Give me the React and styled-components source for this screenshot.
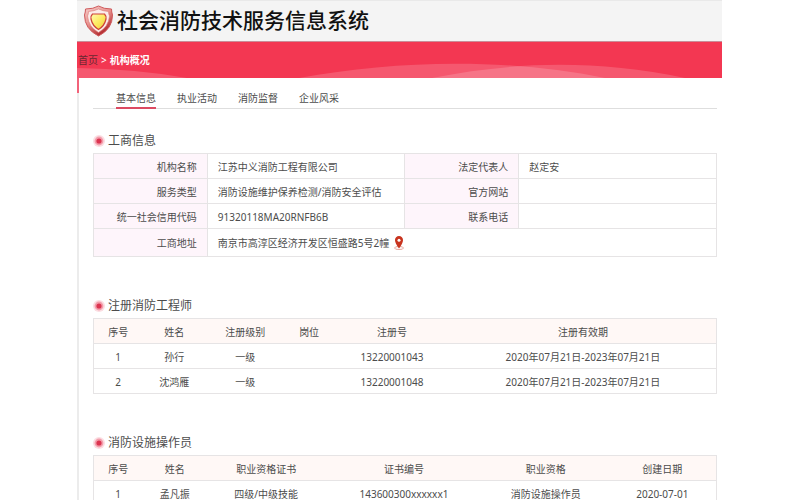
import React from "react";
import styled, { createGlobalStyle } from "styled-components";

const GlobalStyle = createGlobalStyle`
  * {
    box-sizing: border-box;
  }

  body {
    margin: 0;
    background: #fff;
    color: #4c4c4c;
    font-family: "Noto Sans", "Noto Sans CJK SC", sans-serif;
    font-size: 10px;
    line-height: 16px;
  }
`;

const Page = styled.div`
  padding: 0 78px 0 77px;
`;

const Header = styled.header`
  display: flex;
  align-items: center;
  gap: 3px;
  height: 42px;
  padding-left: 6px;
  background: #f4f4f4;
  border-top: 1px solid #e9e9e9;
  border-bottom: 1px solid #c98d98;
`;

const SiteTitle = styled.h1`
  margin: 0;
  padding-bottom: 4px;
  font-family: "Noto Sans CJK SC", sans-serif;
  font-weight: 500;
  font-size: 21px;
  line-height: 32px;
  color: #111;
  white-space: nowrap;
`;

const Banner = styled.div`
  display: grid;
  height: 36px;
  background: #f33752;

  > * {
    grid-area: 1 / 1;
  }
`;

const Waves = styled.svg`
  display: block;
  width: 100%;
  height: 36px;
`;

const Breadcrumb = styled.nav`
  display: flex;
  gap: 3px;
  align-self: center;
  padding-left: 1px;
  color: #fff;
  z-index: 1;

  a {
    color: #6b2731;
    text-decoration: none;
  }

  strong {
    font-weight: 700;
  }
`;

const Content = styled.main`
  padding: 0 5px 0 14px;
  border-left: 2px solid;
  border-image: linear-gradient(#f2637a 16px, #ececec 16px) 1;
`;

const Tabs = styled.nav`
  display: flex;
  gap: 21px;
  padding: 12px 0 0 23px;
  border-bottom: 1px solid #dedede;
`;

const Tab = styled.a`
  height: 19px;
  margin-bottom: -1px;
  color: #4c4c4c;
  text-decoration: none;
  border-bottom: 2px solid ${(props) => (props.$active ? "#dc4a62" : "transparent")};
`;

const Section = styled.section`
  margin-bottom: 38px;

  &:first-of-type {
    margin-top: 21px;
  }
`;

const SectionTitle = styled.h2`
  display: flex;
  align-items: center;
  gap: 3px;
  margin: 0 0 2px;
  padding-top: 1px;
  font-weight: 400;
  font-size: 12px;
  line-height: 20px;
`;

const Table = styled.table`
  width: 100%;
  table-layout: fixed;
  border-collapse: collapse;
  border: 1px solid #e6e4e5;

  tr {
    height: 25px;
    border-bottom: 1px solid #e6e4e5;
  }

  th,
  td {
    padding: 2px 0 0;
    font-weight: 400;
    white-space: nowrap;
  }
`;

const InfoTable = styled(Table)`
  tr:last-child {
    height: 28px;
  }

  th,
  td {
    padding: 2px 10px 0;
    text-align: left;
    border-right: 1px solid #e6e4e5;
  }

  tr:last-child > * {
    padding-top: 0;
  }

  th {
    text-align: right;
    background: #fef5fb;
  }
`;

const ListTable = styled(Table)`
  text-align: center;

  thead {
    background: #fff8f6;
  }
`;

const Address = styled.span`
  display: flex;
  align-items: center;
  gap: 4px;
`;

const ShieldIcon = () => (
  <svg width="31" height="32" viewBox="0 0 30 32" aria-hidden="true">
    <defs>
      <linearGradient id="shield-red" x1="0" y1="0" x2="0.6" y2="1">
        <stop offset="0" stopColor="#f6cfcd" />
        <stop offset="0.5" stopColor="#e99490" />
        <stop offset="1" stopColor="#ad2226" />
      </linearGradient>
      <linearGradient id="shield-gold" x1="0" y1="0" x2="1" y2="1">
        <stop offset="0" stopColor="#fffbb0" />
        <stop offset="0.5" stopColor="#fdeb62" />
        <stop offset="1" stopColor="#edc83a" />
      </linearGradient>
    </defs>
    <path
      d="M15 1 Q20 4 28 4 Q28 7 29 10 Q29 24 15 31 Q1 24 1 10 Q2 7 2 4 Q10 4 15 1 Z"
      fill="url(#shield-red)"
      stroke="#cf5a5c"
    />
    <path
      d="M15 4 Q19 6 25 6.5 Q25 9 26 11 Q25 22 15 27.5 Q5 22 4 11 Q5 9 5 6.5 Q11 6 15 4 Z"
      fill="#fbecea"
      stroke="#dc7b79"
      strokeWidth="0.6"
    />
    <path
      d="M9 9 H21 Q23 11 22.5 14 Q21 21 15 24.5 Q9 21 7.5 14 Q7 11 9 9 Z"
      fill="url(#shield-gold)"
      stroke="#cf4238"
      strokeWidth="1.2"
    />
  </svg>
);

const BulletIcon = () => (
  <svg width="12" height="12" viewBox="0 0 12 12" aria-hidden="true">
    <circle cx="6" cy="6" r="6" fill="#fbdde2" />
    <circle cx="6" cy="6" r="4.4" fill="#f39eac" />
    <circle cx="6" cy="6" r="2.6" fill="#dc3450" />
  </svg>
);

const PinIcon = () => (
  <svg width="12" height="14" viewBox="0 0 12 14" aria-hidden="true">
    <ellipse cx="6" cy="12" rx="4.5" ry="1.5" fill="none" stroke="#e6a39b" />
    <path d="M6 0 A4 4 0 0 1 10 4.2 Q10 7 6 12.5 Q2 7 2 4.2 A4 4 0 0 1 6 0 Z" fill="#c8341f" />
    <circle cx="6" cy="4.2" r="1.5" fill="#fff" />
  </svg>
);

const tabs = ["基本信息", "执业活动", "消防监督", "企业风采"];

const engineers = {
  columns: ["序号", "姓名", "注册级别", "岗位", "注册号", "注册有效期"],
  widths: [49, 64, 78, 50, 116, 267],
  rows: [
    ["1", "孙行", "一级", "", "13220001043", "2020年07月21日-2023年07月21日"],
    ["2", "沈鸿雁", "一级", "", "13220001048", "2020年07月21日-2023年07月21日"],
  ],
};

const operators = {
  columns: ["序号", "姓名", "职业资格证书", "证书编号", "职业资格", "创建日期"],
  widths: [49, 65, 118, 158, 126, 108],
  rows: [["1", "孟凡振", "四级/中级技能", "143600300xxxxxx1", "消防设施操作员", "2020-07-01"]],
};

const Col = styled.col`
  width: ${(props) => (props.$share / 624) * 100}%;
`;

const List = ({ data }) => (
  <ListTable>
    <colgroup>
      {data.widths.map((share, i) => (
        <Col key={i} $share={share} />
      ))}
    </colgroup>
    <thead>
      <tr>
        {data.columns.map((column) => (
          <th key={column} scope="col">{column}</th>
        ))}
      </tr>
    </thead>
    <tbody>
      {data.rows.map((row) => (
        <tr key={row[0]}>
          {row.map((cell, i) => (
            <td key={i}>{cell}</td>
          ))}
        </tr>
      ))}
    </tbody>
  </ListTable>
);

const App = () => {
  return (
    <>
      <GlobalStyle />
      <Page>
        <Header>
          <ShieldIcon />
          <SiteTitle>社会消防技术服务信息系统</SiteTitle>
        </Header>
        <Banner>
          <Waves viewBox="0 0 645 36" preserveAspectRatio="none" aria-hidden="true">
            <g fill="#fff" fillOpacity="0.17">
              <path d="M0 26 Q60 27 110 36 H0 Z" />
              <path d="M222 36 C320 18 430 16 528 36 Z" />
              <path d="M355 36 C440 19 520 18 608 36 Z" />
            </g>
          </Waves>
          <Breadcrumb>
            <a href="#home">首页</a>
            <span>&gt;</span>
            <strong>机构概况</strong>
          </Breadcrumb>
        </Banner>
        <Content>
          <Tabs>
            {tabs.map((tab, i) => (
              <Tab key={tab} href={`#tab-${i + 1}`} $active={i === 0}>
                {tab}
              </Tab>
            ))}
          </Tabs>

          <Section>
            <SectionTitle>
              <BulletIcon />
              工商信息
            </SectionTitle>
            <InfoTable>
              <colgroup>
                <Col $share={114} />
                <Col $share={198} />
                <Col $share={114} />
                <Col $share={198} />
              </colgroup>
              <tbody>
                <tr>
                  <th scope="row">机构名称</th>
                  <td>江苏中义消防工程有限公司</td>
                  <th scope="row">法定代表人</th>
                  <td>赵定安</td>
                </tr>
                <tr>
                  <th scope="row">服务类型</th>
                  <td>消防设施维护保养检测/消防安全评估</td>
                  <th scope="row">官方网站</th>
                  <td />
                </tr>
                <tr>
                  <th scope="row">统一社会信用代码</th>
                  <td>91320118MA20RNFB6B</td>
                  <th scope="row">联系电话</th>
                  <td />
                </tr>
                <tr>
                  <th scope="row">工商地址</th>
                  <td colSpan={3}>
                    <Address>
                      南京市高淳区经济开发区恒盛路5号2幢
                      <PinIcon />
                    </Address>
                  </td>
                </tr>
              </tbody>
            </InfoTable>
          </Section>

          <Section>
            <SectionTitle>
              <BulletIcon />
              注册消防工程师
            </SectionTitle>
            <List data={engineers} />
          </Section>

          <Section>
            <SectionTitle>
              <BulletIcon />
              消防设施操作员
            </SectionTitle>
            <List data={operators} />
          </Section>
        </Content>
      </Page>
    </>
  );
};

export default App;
